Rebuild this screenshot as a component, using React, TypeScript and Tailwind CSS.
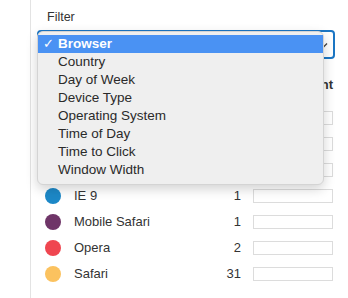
import React from 'react';

const rows = [
  { name: '', count: null, color: '' },
  { name: '', count: null, color: '' },
  { name: '', count: null, color: '' },
  { name: 'IE 9', count: 1, color: '#1c88c7' },
  { name: 'Mobile Safari', count: 1, color: '#6f3568' },
  { name: 'Opera', count: 2, color: '#ef4650' },
  { name: 'Safari', count: 31, color: '#fbc25f' },
];

const options = [
  'Browser',
  'Country',
  'Day of Week',
  'Device Type',
  'Operating System',
  'Time of Day',
  'Time to Click',
  'Window Width',
];

export default function App() {
  return (
    <div
      className="relative w-[348px] h-[298px] bg-white overflow-hidden text-[#333]"
      style={{ fontFamily: '"Liberation Sans", Arial, sans-serif' }}
    >
      <div className="ml-[30px] h-full border-l border-[#e3e3e3] pl-[6px] pr-[14px]">
        <div className="pl-[10px] pt-[9px] text-[12.5px] leading-[16px] text-[#333]">Filter</div>

        {/* select behind the open menu */}
        <div className="mt-[5px] h-[29px] w-[298px] rounded-[4px] border-2 border-[#1b76c4] flex items-center justify-end pr-[5px]">
          <svg width="8" height="6" viewBox="0 0 8 6" className="text-[#444]">
            <path d="M1 1.5 L4 4.5 L7 1.5" fill="none" stroke="currentColor" strokeWidth="1.3" />
          </svg>
        </div>

        <div className="mt-[19px] flex items-center justify-end h-[14px] text-[13px] font-bold text-[#333]">
          <span className="mr-[1px]">Percent</span>
        </div>

        <div className="mt-[13px] flex flex-col">
          {rows.map((r, i) => (
            <div key={i} className="flex items-center h-[26px] text-[13px]">
              {r.name ? (
                <>
                  <span className="ml-[8px] w-[16px] h-[16px] rounded-full" style={{ background: r.color }} />
                  <span className="ml-[13px] text-[#333]">{r.name}</span>
                  <span className="ml-auto text-[#333]">{r.count}</span>
                </>
              ) : (
                <span className="flex-1" />
              )}
              <span className="ml-[12px] mr-[1px] w-[80px] h-[14px] border border-[#dcdcdc] bg-white" />
            </div>
          ))}
        </div>
      </div>

      {/* open dropdown menu */}
      <div className="absolute left-[37px] top-[31px] w-[287px] rounded-[6px] bg-[#efefef] border border-[#d4d4d4] shadow-[0_4px_12px_rgba(0,0,0,0.18)] pt-[3px] pb-[5px] text-[13.5px] text-[#2a2a2a]">
        {options.map((o, i) => (
          <div
            key={o}
            className={
              i === 0
                ? 'flex items-center h-[18px] bg-[#4a92f3] text-white'
                : 'flex items-center h-[18px]'
            }
          >
            <span className="w-[20px] pl-[5px] text-[13px]">{i === 0 ? '✓' : ''}</span>
            <span className={i === 0 ? 'font-bold' : ''}>{o}</span>
          </div>
        ))}
      </div>
    </div>
  );
}
